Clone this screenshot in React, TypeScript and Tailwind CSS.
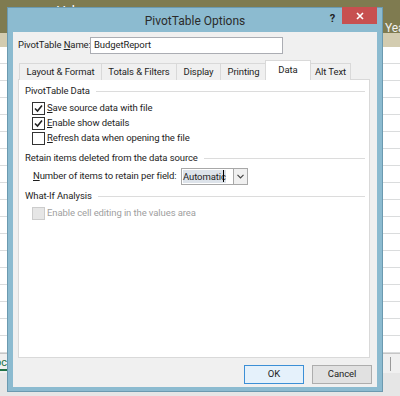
import React from "react";

const U = ({ c }: { c: string }) => <span className="underline underline-offset-[1px]">{c}</span>;

function Check({ checked, disabled }: { checked?: boolean; disabled?: boolean }) {
  return (
    <div
      className={
        "w-[13px] h-[13px] border flex items-center justify-center shrink-0 " +
        (disabled ? "border-[#cccccc] bg-[#e6e6e6]" : "border-[#333333] bg-white")
      }
    >
      {checked && (
        <svg width="9" height="9" viewBox="0 0 9 9">
          <path d="M1 4.5 L3.5 7 L8 1.5" fill="none" stroke="#222" strokeWidth="1.6" />
        </svg>
      )}
    </div>
  );
}

function GroupHead({ title }: { title: string }) {
  return (
    <div className="flex items-center h-[16px] pl-[6px] pr-[4px]">
      <span className="whitespace-nowrap">{title}</span>
      <div className="flex-1 h-px bg-[#dcdcdc] ml-[6px]" />
    </div>
  );
}

function CheckRow({ label, checked, disabled }: { label: React.ReactNode; checked?: boolean; disabled?: boolean }) {
  return (
    <div className="flex items-center h-[15px] pl-[13px] gap-[2px]">
      <Check checked={checked} disabled={disabled} />
      <span className={"whitespace-nowrap " + (disabled ? "text-[#a0a0a0]" : "")}>{label}</span>
    </div>
  );
}

export default function App() {
  const rows = Array.from({ length: 18 });
  const tabs = [
    { t: "Layout & Format", w: "w-[82px]" },
    { t: "Totals & Filters", w: "w-[75px]" },
    { t: "Display", w: "w-[44px]" },
    { t: "Printing", w: "w-[46px]" },
    { t: "Data", w: "w-[46px]", sel: true },
    { t: "Alt Text", w: "w-[41px]" },
  ];
  return (
    <div className="relative w-[400px] h-[396px] overflow-hidden bg-white font-['Roboto',sans-serif] text-[9.5px] tracking-[-0.1px] text-[#1e1e1e]">
      {/* background spreadsheet */}
      <div className="flex flex-col h-full">
        <div className="h-[33px] bg-[#7f7b50] relative shrink-0">
          <span className="absolute left-[57px] top-[1px] text-[13px] text-white">Valu</span>
          <span className="absolute left-[385px] top-[19px] text-[12px] text-[#f2f2f2]">Yea</span>
        </div>
        <div className="h-[14px] bg-[#d3ccb0] shrink-0" />
        <div className="flex flex-col">
          {rows.map((_, i) => (
            <div key={i} className="h-[17px] border-b border-[#dadcdd] shrink-0" />
          ))}
        </div>
        <div className="h-[20px] bg-[#f0f0f0] flex items-center shrink-0 border-t border-[#c6c6c6]">
          <span className="text-[11px] text-[#217346] border-b-2 border-[#217346] leading-[13px] -ml-[12px]">Doc</span>
          <div className="ml-auto mr-[9px] w-px h-[14px] bg-[#9a9a9a]" />
        </div>
        <div className="flex-1 bg-[#e6e6e6]" />
      </div>

      {/* dialog window */}
      <div className="absolute left-[7px] top-[7px] w-[376px] h-[385px] bg-[#8cbbd0] border border-[#6b9ab0] flex flex-col px-[5px] pb-[4px]">
        <div className="relative h-[24px] shrink-0 flex items-center justify-center">
          <span className="text-[12px] tracking-normal text-[#2b2b2b] mt-[1px]">PivotTable Options</span>
          <span className="absolute right-[42px] top-[3px] text-[11px] font-bold text-[#222]">?</span>
          <div className="absolute right-0 top-[-1px] w-[35px] h-[17px] bg-[#c75050] flex items-center justify-center">
            <svg width="8" height="8" viewBox="0 0 8 8">
              <path d="M1 1 L7 7 M7 1 L1 7" stroke="white" strokeWidth="1.6" />
            </svg>
          </div>
        </div>
        <div className="flex-1 bg-[#f0f0f0] flex flex-col">
          {/* name row */}
          <div className="flex items-center mt-[5px] pl-[5px] h-[17px]">
            <span className="w-[72px] whitespace-nowrap">
              PivotTable <U c="N" />ame:
            </span>
            <div className="w-[193px] h-[17px] bg-white border border-[#abadb3] flex items-center pl-[3px]">
              BudgetReport
            </div>
          </div>
          {/* tabs */}
          <div className="flex items-end mt-[6px] pl-[6px] h-[20px] relative z-10">
            {tabs.map((tb) => (
              <div
                key={tb.t}
                className={
                  tb.w +
                  " flex items-center justify-center whitespace-nowrap border border-[#d9d9d9] " +
                  (tb.sel
                    ? "h-[20px] bg-white border-b-0 -mx-[1px]"
                    : "h-[17px] bg-[#f0f0f0] border-b-0 border-r-0 last:border-r")
                }
              >
                {tb.t}
              </div>
            ))}
          </div>
          {/* panel */}
          <div className="ml-[5px] w-[352px] h-[279px] bg-white border border-[#d9d9d9] flex flex-col -mt-px">
            <div className="mt-[3px]">
              <GroupHead title="PivotTable Data" />
            </div>
            <div className="mt-[2px]">
              <CheckRow checked label={<><U c="S" />ave source data with file</>} />
              <CheckRow checked label={<><U c="E" />nable show details</>} />
              <CheckRow label={<><U c="R" />efresh data when opening the file</>} />
            </div>
            <div className="mt-[4px]">
              <GroupHead title="Retain items deleted from the data source" />
            </div>
            <div className="flex items-center h-[18px] mt-[1px] pl-[14px]">
              <span className="w-[148px] whitespace-nowrap">
                <U c="N" />umber of items to retain per field:
              </span>
              <div className="w-[67px] h-[17px] border border-[#a8a8a8] flex bg-white">
                <div className="flex-1 flex items-center overflow-hidden pl-[1px]">
                  <span className="bg-[#dde3ea] leading-[13px] whitespace-nowrap">Automatic</span>
                  <span className="w-px h-[12px] bg-black -ml-[3px] shrink-0" />
                </div>
                <div className="w-[14px] border-l border-[#a8a8a8] bg-[#f0f0f0] flex items-center justify-center">
                  <svg width="7" height="5" viewBox="0 0 7 5">
                    <path d="M0.5 0.8 L3.5 3.8 L6.5 0.8" fill="none" stroke="#444" strokeWidth="1.2" />
                  </svg>
                </div>
              </div>
            </div>
            <div className="mt-[3px]">
              <GroupHead title="What-If Analysis" />
            </div>
            <div className="mt-[2px]">
              <CheckRow disabled label="Enable cell editing in the values area" />
            </div>
          </div>
          {/* buttons */}
          <div className="flex justify-end gap-[8px] mt-[7px] pr-[5px]">
            <div className="w-[60px] h-[19px] border border-[#3c8fd6] bg-[#e5f1fb] flex items-center justify-center">OK</div>
            <div className="w-[60px] h-[19px] border border-[#adadad] bg-[#e1e1e1] flex items-center justify-center">Cancel</div>
          </div>
        </div>
      </div>
    </div>
  );
}
